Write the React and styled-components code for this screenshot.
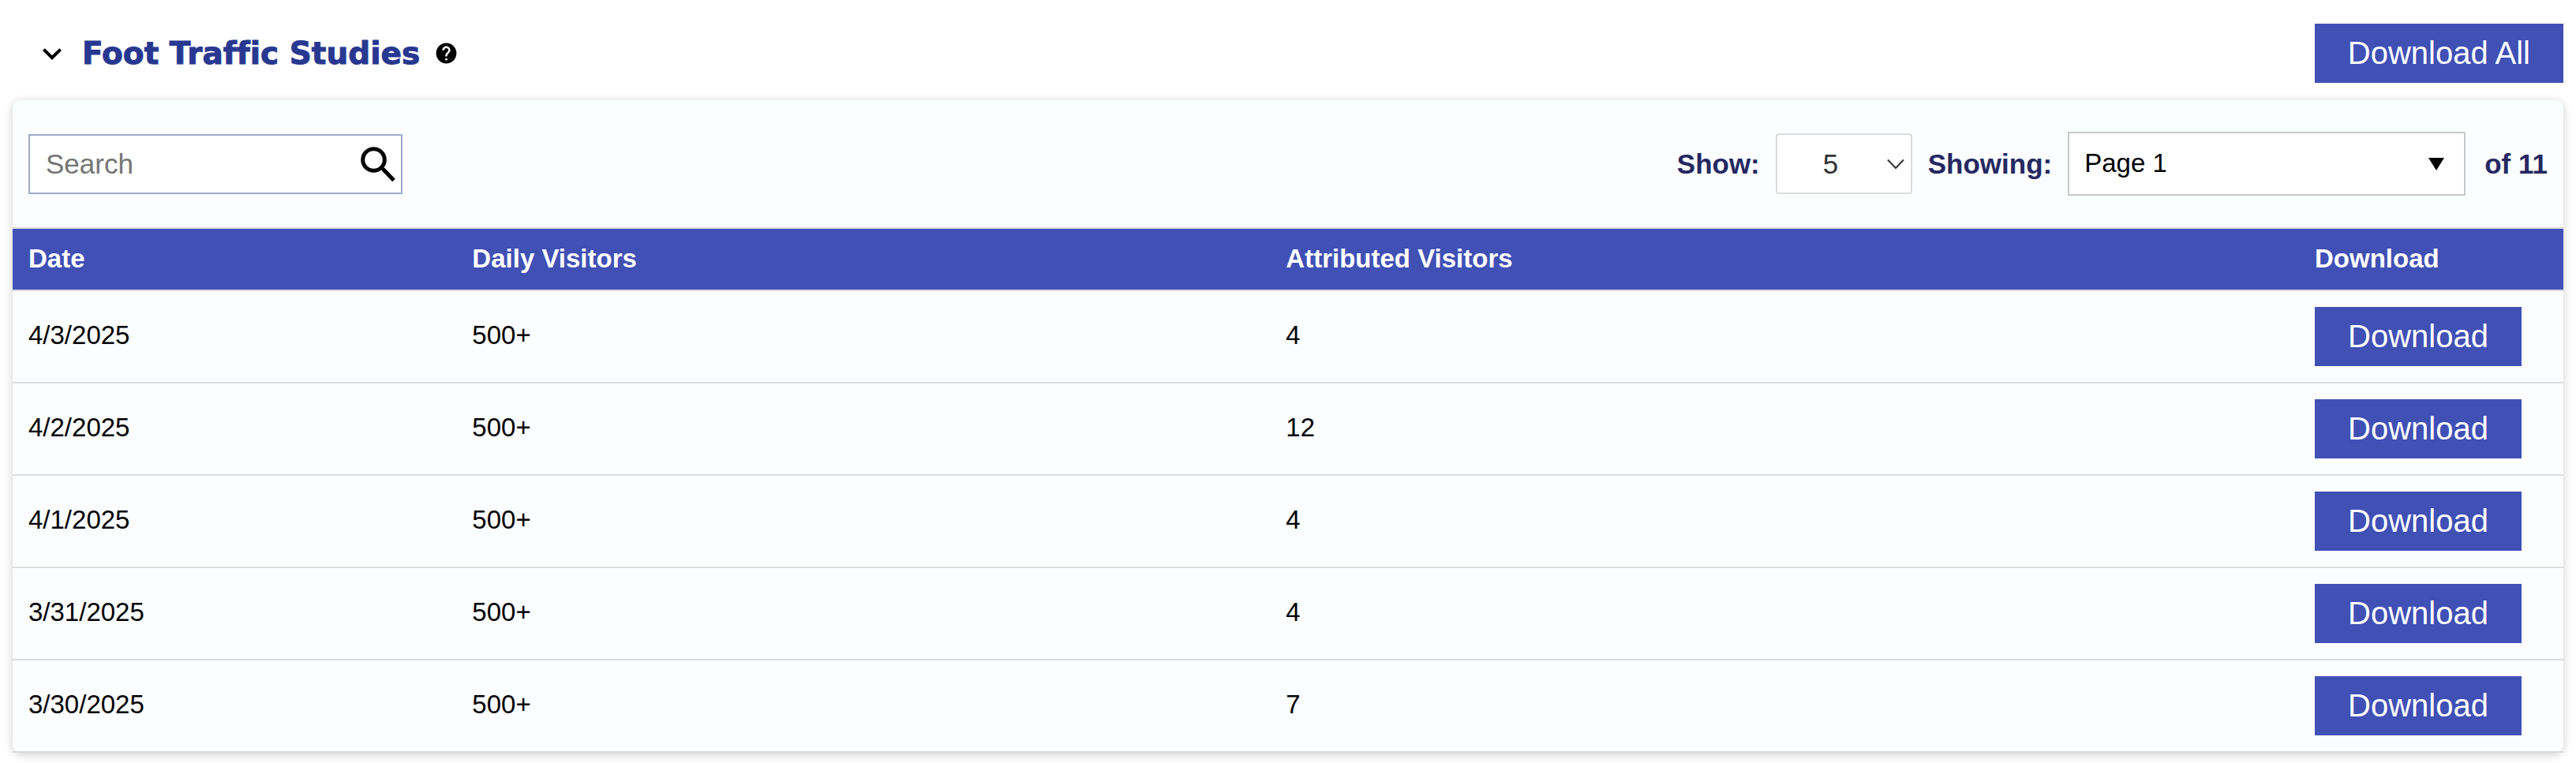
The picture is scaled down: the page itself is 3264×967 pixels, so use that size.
import React, { useState } from "react";
import styled, { createGlobalStyle } from "styled-components";
import { MdHelp, MdExpandMore } from "react-icons/md";

const GlobalStyle = createGlobalStyle`
  * {
    box-sizing: border-box;
  }
  body {
    margin: 0;
    background-color: #fff;
    color: #000;
    font-family: Arial, "Liberation Sans", sans-serif;
    font-size: 33px;
  }
  button, input, select {
    font-family: inherit;
  }
`;

const Page = styled.main`
  padding: 30px 16px 12px;
`;

const Header = styled.header`
  display: flex;
  align-items: center;
  justify-content: space-between;
  margin-bottom: 22px;
`;

const TitleGroup = styled.div`
  display: flex;
  align-items: center;
  padding-left: 26px;
`;

const IconButton = styled.button`
  display: flex;
  padding: 0;
  border: none;
  background: none;
  color: #000;
  cursor: pointer;
`;

const Title = styled.h2`
  margin: 0 18px 0 14px;
  color: #283891;
  font-family: "Arial Black", "DejaVu Sans", sans-serif;
  font-size: 39px;
  font-weight: 900;
  font-variant-ligatures: none;
  line-height: 48px;
  -webkit-text-stroke: 1px #283891;
`;

const Button = styled.button`
  height: 75px;
  padding: 0 42px 2px;
  border: none;
  background-color: #4050b5;
  color: #fff;
  font-size: 40px;
  line-height: 46px;
  cursor: pointer;
`;

const Card = styled.section`
  border-radius: 10px;
  background-color: #fbfdff;
  box-shadow: 0 2px 12px rgba(0, 0, 0, 0.2);
`;

const Toolbar = styled.div`
  display: flex;
  align-items: center;
  justify-content: space-between;
  padding: 40px 20px;
`;

const SearchBox = styled.label`
  display: flex;
  align-items: center;
  width: 474px;
  height: 76px;
  padding: 0 7px 0 20px;
  border: 2px solid #9fa8c7;
  background-color: #fff;
`;

const SearchInput = styled.input`
  flex: 1;
  min-width: 0;
  padding: 0;
  border: none;
  outline: none;
  background: none;
  font-size: 35px;
  &::placeholder {
    color: #757575;
  }
`;

const Pager = styled.div`
  display: flex;
  align-items: center;
  gap: 20px;
  color: #252861;
  font-size: 35px;
  font-weight: bold;
`;

const PageCount = styled.span`
  padding-left: 4px;
`;

const SelectWrapper = styled.div`
  position: relative;
  display: flex;
  align-items: center;
  svg {
    position: absolute;
    right: ${(props) => props.$arrowRight}px;
    pointer-events: none;
  }
`;

const SizeSelect = styled.select`
  appearance: none;
  width: 173px;
  height: 77px;
  padding: 0 50px 0 58px;
  border: 2px solid #dcdcdc;
  border-radius: 4px;
  background-color: #fff;
  color: #333;
  font-size: 35px;
`;

const PageSelect = styled.select`
  appearance: none;
  width: 504px;
  height: 81px;
  padding: 0 60px 2px 19px;
  border: 2px solid #c8c8c8;
  border-radius: 0;
  background-color: #fff;
  color: #000;
  font-size: 33px;
`;

const Table = styled.table`
  width: 100%;
  border-collapse: separate;
  border-spacing: 0;
  table-layout: fixed;
`;

const TableHeader = styled.th`
  width: ${(props) => props.$width};
  height: 81px;
  padding: 0 20px 2px;
  border-top: 2px solid #dcdcdc;
  border-bottom: 2px solid #dcdcdc;
  background-color: #4050b5;
  color: #fff;
  font-size: 33px;
  line-height: 38px;
  text-align: left;
`;

const TableCell = styled.td`
  height: 117px;
  padding: 0 20px 4px;
  border-bottom: 2px solid #dcdcdc;
  line-height: 38px;
`;

const ActionCell = styled(TableCell)`
  padding: 0 20px;
`;

const columns = [
  { title: "Date", width: "17.4%" },
  { title: "Daily Visitors", width: "31.9%" },
  { title: "Attributed Visitors", width: "auto" },
  { title: "Download", width: "335px" },
];

const data = [
  { date: "4/3/2025", daily: "500+", attributed: "4" },
  { date: "4/2/2025", daily: "500+", attributed: "12" },
  { date: "4/1/2025", daily: "500+", attributed: "4" },
  { date: "3/31/2025", daily: "500+", attributed: "4" },
  { date: "3/30/2025", daily: "500+", attributed: "7" },
];

const pages = Array.from({ length: 11 }, (_, index) => index + 1);

const SearchIcon = () => (
  <svg
    width="44"
    height="46"
    viewBox="0 0 44 46"
    fill="none"
    stroke="#000"
    strokeWidth="5"
  >
    <circle cx="16.5" cy="17.5" r="13.8" />
    <path d="M26 27L29 30" strokeWidth="4" />
    <path d="M28.5 29.5L42 43.5" />
  </svg>
);

const App = () => {
  const [open, setOpen] = useState(true);

  const rows = data.map((item) => (
    <tr key={item.date}>
      <TableCell>{item.date}</TableCell>
      <TableCell>{item.daily}</TableCell>
      <TableCell>{item.attributed}</TableCell>
      <ActionCell>
        <Button type="button">Download</Button>
      </ActionCell>
    </tr>
  ));

  return (
    <Page>
      <GlobalStyle />
      <Header>
        <TitleGroup>
          <IconButton
            type="button"
            aria-label="Toggle section"
            aria-expanded={open}
            onClick={() => setOpen(!open)}
          >
            <MdExpandMore size={48} />
          </IconButton>
          <Title>Foot Traffic Studies</Title>
          <IconButton type="button" aria-label="Help">
            <MdHelp size={31} />
          </IconButton>
        </TitleGroup>
        <Button type="button">Download All</Button>
      </Header>
      {open && (
        <Card>
          <Toolbar>
            <SearchBox>
              <SearchInput
                type="text"
                placeholder="Search"
                aria-label="Search"
              />
              <SearchIcon />
            </SearchBox>
            <Pager>
              <label htmlFor="size">Show:</label>
              <SelectWrapper $arrowRight={10}>
                <SizeSelect id="size" defaultValue="5">
                  <option>5</option>
                  <option>10</option>
                  <option>25</option>
                </SizeSelect>
                <svg width="22" height="14" viewBox="0 0 22 14">
                  <path
                    d="M1 1.5L11 12L21 1.5"
                    fill="none"
                    stroke="#333"
                    strokeWidth="2"
                  />
                </svg>
              </SelectWrapper>
              <label htmlFor="page">Showing:</label>
              <SelectWrapper $arrowRight={27}>
                <PageSelect id="page" defaultValue="1">
                  {pages.map((page) => (
                    <option key={page} value={page}>
                      Page {page}
                    </option>
                  ))}
                </PageSelect>
                <svg width="20" height="16" viewBox="0 0 20 16">
                  <path d="M0 0H20L10 16Z" />
                </svg>
              </SelectWrapper>
              <PageCount>of 11</PageCount>
            </Pager>
          </Toolbar>
          <Table>
            <thead>
              <tr>
                {columns.map((column) => (
                  <TableHeader key={column.title} $width={column.width}>
                    {column.title}
                  </TableHeader>
                ))}
              </tr>
            </thead>
            <tbody>{rows}</tbody>
          </Table>
        </Card>
      )}
    </Page>
  );
};

export default App;
